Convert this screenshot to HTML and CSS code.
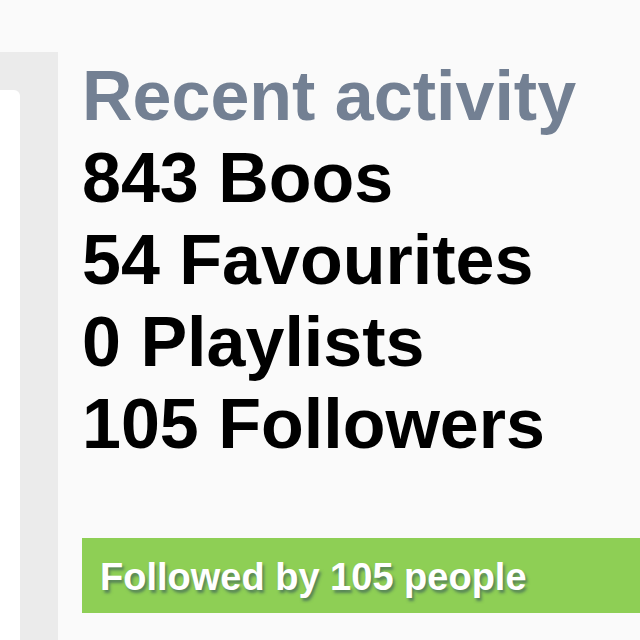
FILE: index.html
```html
<!DOCTYPE html>
<html>
<head>
<meta charset="utf-8">
<link rel="stylesheet" href="styles.css">
</head>
<body>
<div class="page">
  <aside class="sidebar">
    <div class="card"></div>
  </aside>
  <main class="main">
    <h1 class="title">Recent activity</h1>
    <ul class="stats">
      <li>843 Boos</li>
      <li>54 Favourites</li>
      <li>0 Playlists</li>
      <li>105 Followers</li>
    </ul>
    <div class="followed">Followed by 105 people</div>
  </main>
</div>
</body>
</html>
```
FILE: styles.css
```css
html, body {
  margin: 0;
  padding: 0;
  height: 100%;
  background: #fafafa;
  overflow: hidden;
}
.page {
  display: flex;
  height: 640px;
  padding-top: 52px;
  box-sizing: border-box;
  font-family: "Liberation Sans", Arial, sans-serif;
}
.sidebar {
  width: 58px;
  flex: none;
  background: #ebebeb;
  padding-top: 38px;
  box-sizing: border-box;
  display: flex;
  flex-direction: column;
}
.card {
  width: 20px;
  flex: 1;
  background: #ffffff;
  border-top-right-radius: 6px;
}
.main {
  flex: 1;
  padding-left: 24px;
  padding-top: 3px;
}
.title {
  margin: 0;
  font-size: 70px;
  line-height: 82px;
  font-weight: bold;
  color: #738093;
}
.stats {
  list-style: none;
  margin: 0;
  padding: 0;
  font-size: 70px;
  line-height: 82px;
  font-weight: bold;
  color: #000;
}
.followed {
  margin-top: 73px;
  height: 75px;
  box-sizing: border-box;
  padding: 4px 0 0 18px;
  background: #8ecf55;
  color: #ffffff;
  font-size: 38px;
  line-height: 71px;
  font-weight: bold;
  text-shadow: 2px 3px 3px rgba(40, 70, 90, 0.55);
}
```
